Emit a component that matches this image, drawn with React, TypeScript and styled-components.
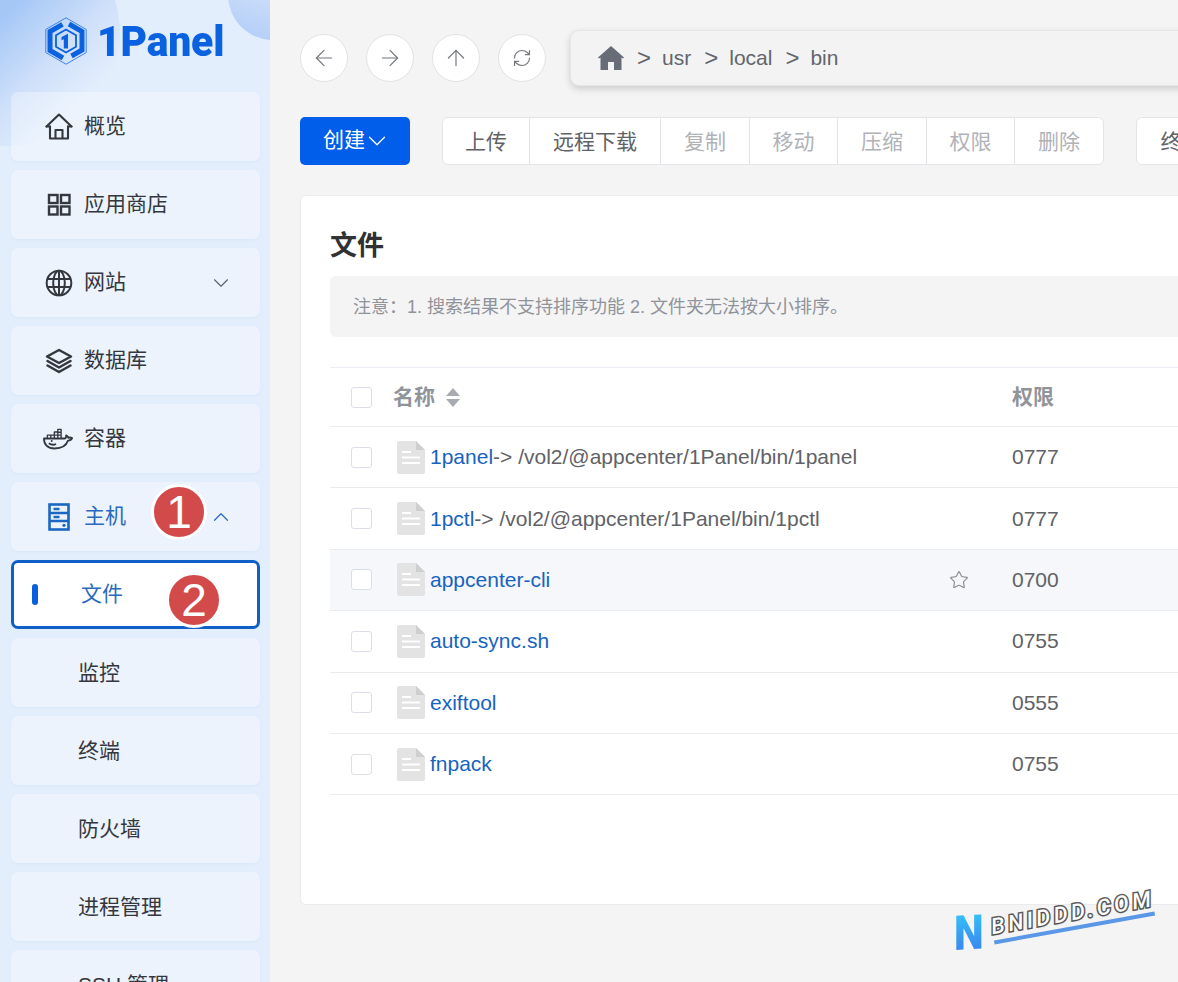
import React from "react";
import styled, { createGlobalStyle } from "styled-components";
import { ArrowLeft, ArrowRight, ArrowUp, RefreshCw, ChevronDown, ChevronUp, Star } from "lucide-react";

const CJK = `"Liberation Sans", "Noto Sans CJK SC", sans-serif`;

const Global = createGlobalStyle`
  html, body { margin: 0; padding: 0; height: 100%; overflow: hidden; background: #f4f4f5; }
  * { box-sizing: border-box; }
  body { font-family: ${CJK}; }
`;

const Page = styled.div`
  position: relative;
  display: flex;
  width: 1178px;
  height: 982px;
  overflow: hidden;
`;

const Sidebar = styled.aside`
  position: relative;
  flex: 0 0 270px;
  height: 982px;
  overflow: hidden;
  background: #e3eefc;
  padding: 0 10px 0 11px;
`;

const BlobLeft = styled.div`
  position: absolute;
  left: -105px;
  top: -79px;
  width: 225px;
  height: 225px;
  border-radius: 50%;
  background: linear-gradient(135deg, #a4c7f6 45%, #cfe0fa 66%, #e3eefc 82%);
`;

const BlobRight = styled.div`
  position: absolute;
  left: 228px;
  top: -50px;
  width: 90px;
  height: 90px;
  border-radius: 50%;
  background: linear-gradient(20deg, #b5cff8 10%, #dae7fb 75%);
`;

const LogoRow = styled.div`
  position: relative;
  display: flex;
  align-items: center;
  gap: 10px;
  height: 92px;
  padding: 0 0 10px 34px;
`;

const LogoText = styled.span`
  font-family: "Roboto", sans-serif;
  font-weight: 900;
  font-size: 43px;
  line-height: 48px;
  letter-spacing: -0.2px;
  color: #0a62e0;
  transform: scaleX(0.95);
  transform-origin: left center;
`;

const Menu = styled.nav`
  position: relative;
  display: flex;
  flex-direction: column;
  gap: 9px;
`;

const Item = styled.div<{ $open?: boolean }>`
  display: flex;
  align-items: center;
  flex: 0 0 69px;
  height: 69px;
  padding: 0 26px 0 34px;
  border-radius: 7px;
  background: rgba(255, 255, 255, 0.32);
  box-shadow: 0 1px 2px rgba(190, 210, 240, 0.25);
  color: ${(p) => (p.$open ? "#2a69bd" : "#34383e")};
  font-size: 21px;
  line-height: 28px;
`;

const ItemIcon = styled.span`
  display: flex;
  align-items: center;
  justify-content: center;
  width: 28px;
  height: 30px;
  margin-right: 11px;
`;

const ItemLabel = styled.span`
  flex: 1;
  padding-bottom: 2px;
`;

const SubItem = styled.div<{ $active?: boolean }>`
  position: relative;
  display: flex;
  align-items: center;
  flex: 0 0 69px;
  height: 69px;
  padding: 0 0 ${(p) => (p.$active ? "2px" : "0")} 67px;
  border-radius: 7px;
  font-size: 21px;
  line-height: 28px;
  background: ${(p) => (p.$active ? "#fff" : "rgba(255, 255, 255, 0.32)")};
  border: ${(p) => (p.$active ? "3px solid #105fc7" : "0")};
  color: ${(p) => (p.$active ? "#2a69bd" : "#34383e")};
  box-shadow: ${(p) => (p.$active ? "none" : "0 1px 2px rgba(190, 210, 240, 0.25)")};
`;

const ActiveBar = styled.span`
  position: absolute;
  left: 18px;
  top: 21px;
  width: 6px;
  height: 21px;
  border-radius: 3px;
  background: #0b5fdc;
`;

const Main = styled.main`
  flex: 0 0 1240px;
  padding: 30px 0 0 30px;
`;

const NavRow = styled.div`
  display: flex;
  align-items: center;
  height: 56px;
`;

const RoundBtn = styled.button`
  flex: 0 0 48px;
  width: 48px;
  height: 48px;
  margin-right: 18px;
  display: flex;
  align-items: center;
  justify-content: center;
  padding: 0;
  border-radius: 50%;
  border: 1.5px solid #e2e3e6;
  background: #fff;
  color: #74777c;
`;

const Crumbs = styled.div`
  flex: 1;
  display: flex;
  align-items: center;
  height: 56px;
  margin-left: 6px;
  padding-left: 27px;
  border: 1px solid #e6e6e8;
  border-radius: 9px;
  background: #f3f3f3;
  box-shadow: 0 3px 7px rgba(0, 0, 0, 0.16);
  color: #62666d;
  font-size: 21px;
`;

const CrumbSep = styled.span`
  margin: 0 11px 0 13px;
  font-size: 24px;
`;

const Toolbar = styled.div`
  display: flex;
  align-items: center;
  margin-top: 31px;
`;

const CreateBtn = styled.button`
  display: flex;
  align-items: center;
  width: 110px;
  height: 48px;
  padding: 0 0 2px 23px;
  border: 0;
  border-radius: 5px;
  background: #005eeb;
  color: #fff;
  font-family: ${CJK};
  font-size: 21px;
  line-height: 28px;
`;

const CreateChevron = styled(ChevronDown)`
  margin: 2px 0 0 -3px;
`;

const Group = styled.div`
  display: flex;
  margin-left: 32px;
`;

const GroupBtn = styled.button<{ $off?: boolean }>`
  height: 48px;
  padding: 0 ${(p) => (p.$off ? "23px" : "23.5px")} 2px;
  margin-left: -1.5px;
  border: 1.5px solid #e3e4e7;
  background: #fff;
  color: ${(p) => (p.$off ? "#b0b2b7" : "#606266")};
  font-family: ${CJK};
  font-size: 21px;
  &:first-child { margin-left: 0; padding: 0 22px 2px; border-radius: 6px 0 0 6px; }
  &:last-child { border-radius: 0 6px 6px 0; }
`;

const SoloBtn = styled(GroupBtn)`
  margin-left: 32px;
  border-radius: 6px !important;
`;

const Card = styled.section`
  margin-top: 30px;
  height: 710px;
  padding: 30px 29px;
  background: #fff;
  border: 1px solid #ebebed;
  border-radius: 6px;
`;

const Title = styled.h2`
  margin: 0;
  font-size: 27px;
  line-height: 40px;
  font-weight: 700;
  color: #303133;
`;

const Notice = styled.div`
  display: flex;
  align-items: center;
  height: 61px;
  margin-top: 10px;
  padding: 0 0 3px 23px;
  border-radius: 6px;
  background: #f4f4f5;
  color: #909399;
  font-size: 18px;
`;

const Table = styled.div`
  margin-top: 30px;
  border-top: 1.5px solid #ebeef5;
`;

const Row = styled.div<{ $head?: boolean; $hover?: boolean }>`
  display: grid;
  grid-template-columns: 63px 619px 1fr;
  align-items: center;
  height: ${(p) => (p.$head ? "59px" : "61.4px")};
  border-bottom: 1.5px solid #e9ebf0;
  background: ${(p) => (p.$hover ? "#f5f7fa" : "#fff")};
  color: #606266;
  font-size: 21px;
`;

const Check = styled.span`
  display: block;
  width: 21px;
  height: 21px;
  margin-left: 21px;
  border: 1.5px solid #dcdfe6;
  border-radius: 3px;
  background: #fff;
`;

const HeadCell = styled.div`
  display: flex;
  align-items: center;
  gap: 11px;
  padding-bottom: 4px;
  color: #909399;
  font-weight: 700;
`;

const NameCell = styled.div`
  position: relative;
  display: flex;
  align-items: center;
  padding-left: 4px;
`;

const FileLink = styled.span`
  margin-left: 5px;
  color: #1763bf;
`;

const StarMark = styled.span`
  position: absolute;
  left: 556px;
  top: 50%;
  margin-top: -10px;
  height: 22px;
  color: #8a8d92;
`;

const Badge = styled.div<{ $x: number; $y: number }>`
  position: absolute;
  left: ${(p) => p.$x}px;
  top: ${(p) => p.$y}px;
  width: 56px;
  height: 56px;
  display: flex;
  align-items: center;
  justify-content: center;
  border: 3px solid #fff;
  border-radius: 50%;
  background: #d24a4a;
  color: #fff;
  font-family: "Liberation Sans", sans-serif;
  font-size: 46px;
  line-height: 1;
`;

const Watermark = styled.div`
  position: absolute;
  left: 954px;
  top: 880px;
  width: 210px;
  height: 75px;
`;

const MarkN = styled.span`
  position: absolute;
  left: 0;
  top: 32px;
  font-family: "Roboto", sans-serif;
  font-weight: 900;
  font-size: 48px;
  line-height: 44px;
  transform: rotate(-3deg) skewX(-3deg) scaleX(0.88);
  transform-origin: left center;
  background: linear-gradient(180deg, #35c3fb, #3a7fec);
  -webkit-background-clip: text;
  background-clip: text;
  color: transparent;
`;

const MarkText = styled.span`
  position: absolute;
  left: 36px;
  top: 20px;
  font-family: "Roboto", sans-serif;
  font-style: italic;
  font-weight: 500;
  font-size: 22px;
  line-height: 26px;
  letter-spacing: 3.7px;
  white-space: nowrap;
  color: #fff;
  -webkit-text-stroke: 3px #5c5c5c;
  paint-order: stroke fill;
  text-shadow: 0 1px 2px rgba(0, 0, 0, 0.2);
  transform: rotate(-10deg);
`;

const MarkLine = styled.span`
  position: absolute;
  left: 39px;
  top: 46px;
  width: 163px;
  height: 4px;
  background: #5a97e6;
  transform: rotate(-10.2deg);
`;

const stroke = { fill: "none", stroke: "currentColor", strokeWidth: 2.1, strokeLinejoin: "round" as const, strokeLinecap: "round" as const };

const HomeIcon = () => (
  <svg width="28" height="27" viewBox="0 0 28 27" {...stroke}>
    <path d="M1.5 13.5 14 1.5l12.5 12M5 13.500V25.500h18V13.500M10.500 25.500v-8.500h7v8.500" />
    <path d="M1.500 13.500H5M23 13.500h3.500" />
  </svg>
);
const GridIcon = () => (
  <svg width="24" height="23" viewBox="0 0 24 23" fill="none" stroke="currentColor" strokeWidth="2.4">
    <rect x="2" y="2" width="8.500" height="8" />
    <rect x="14" y="2" width="8.500" height="8" />
    <rect x="2" y="13.500" width="8.500" height="8" />
    <rect x="14" y="13.500" width="8.500" height="8" />
  </svg>
);
const GlobeIcon = () => (
  <svg width="28" height="28" viewBox="0 0 28 28" fill="none" stroke="currentColor" strokeWidth="2">
    <circle cx="14" cy="14" r="12.300" />
    <ellipse cx="14" cy="14" rx="5.800" ry="12.300" />
    <path d="M14 1.700v24.600M2.200 10h23.600M2.200 18h23.600" />
  </svg>
);
const LayersIcon = () => (
  <svg width="28" height="26" viewBox="0 0 28 26" {...stroke} strokeWidth={2.5}>
    <path d="M14 2 26 8.500 14 15 2 8.500Z" />
    <path d="M2.500 13 14 19.500 25.500 13M2.500 17.500 14 24l11.500-6.500" />
  </svg>
);
const DockerIcon = () => (
  <svg width="31" height="22" viewBox="0 0 32 22" fill="none" stroke="currentColor" strokeWidth="1.900" strokeLinejoin="round" style={{ marginLeft: -1, flex: "none" }}>
    <path d="M1 10.500h21.500c1.200-.2 1.600-1 1.400-3.200 1.200.5 2 1.500 2.200 2.600 1.200-.6 2.600-.5 4 .1-1 2-2.700 2.700-4.300 2.600C24 18 19.500 20.800 12 20.800 5 20.800 1 17 1 10.500Z" />
    <path d="M4.500 10V7h3.600v3M8.100 7h3.600v3M11.700 10V3.800h3.600V10M15.300 10V1h3.400v9M11.700 7h7M15.300 4h3.400M8.100 10V7M18.700 10V7h-3.400" strokeWidth="1.400" />
    <path d="M6 15.500c2.500 1.700 5.500 1.700 7.500.6" />
    <circle cx="9" cy="13" r="1" fill="currentColor" stroke="none" />
  </svg>
);
const ServerIcon = () => (
  <svg width="22" height="28" viewBox="0 0 22 28" fill="none" stroke="#1c67c4" strokeWidth="2.600">
    <rect x="1.500" y="1.500" width="19" height="25" />
    <path d="M1.500 10h19M1.500 18h19M5.500 6h6M5.500 14h6" />
    <circle cx="16" cy="22.300" r="1.600" fill="#1c67c4" stroke="none" />
  </svg>
);
const LogoMark = () => (
  <svg width="42" height="48" viewBox="0 0 42 48">
    <path d="M21 .8 41.200 12.400v23.200L21 47.200.8 35.600V12.400Z" fill="none" stroke="#2f79e4" strokeWidth="0.900" />
    <g fill="none" stroke="#0a62e0" strokeWidth="5">
      <path d="M24 7 37 14.500V33l-10.500 6" />
      <path d="M18 41 5 33.500V14.500L17.500 7.300" />
    </g>
    <path d="M21 12.500 31 18.200V29.800L21 35.500 11 29.800V18.200Z" fill="none" stroke="#0a62e0" strokeWidth="1.800" />
    <path d="M16.500 20l6.500-3.200V31.500h-4.200V22.300l-2.300.9Z" fill="#0a62e0" />
  </svg>
);
const SolidHome = () => (
  <svg width="26" height="24" viewBox="0 0 26 24" fill="#676c76">
    <path d="M13 0 26 11.500l-1 1-1.500-1V24H16v-8h-6v8H2.500V11.500l-1.500 1-1-1Z" />
  </svg>
);
const FileIcon = () => (
  <svg width="28" height="33" viewBox="0 0 28 33">
    <path d="M2 0h17l9 9v22a2 2 0 0 1-2 2H2a2 2 0 0 1-2-2V2a2 2 0 0 1 2-2Z" fill="#e3e3e3" />
    <path d="M19 0l9 9h-9Z" fill="#cfcfcf" />
    <path d="M5 11h9M5 16.500h18M5 22h18" stroke="#fff" strokeWidth="2" />
  </svg>
);
const Caret = () => (
  <svg width="14" height="19" viewBox="0 0 14 19" fill="#a8abb2" style={{ marginTop: 4 }}>
    <path d="M7 0l7 8H0ZM7 19l-7-8h14Z" />
  </svg>
);

const menu = [
  { label: "概览", icon: <HomeIcon /> },
  { label: "应用商店", icon: <GridIcon /> },
  { label: "网站", icon: <GlobeIcon />, chev: "down" },
  { label: "数据库", icon: <LayersIcon /> },
  { label: "容器", icon: <DockerIcon /> },
  { label: "主机", icon: <ServerIcon />, chev: "up", open: true },
];
const subs = ["文件", "监控", "终端", "防火墙", "进程管理", "SSH 管理"];
const tools = ["上传", "远程下载", "复制", "移动", "压缩", "权限", "删除"];
const files = [
  { name: "1panel", link: "-> /vol2/@appcenter/1Panel/bin/1panel", perm: "0777" },
  { name: "1pctl", link: "-> /vol2/@appcenter/1Panel/bin/1pctl", perm: "0777" },
  { name: "appcenter-cli", perm: "0700", hover: true },
  { name: "auto-sync.sh", perm: "0755" },
  { name: "exiftool", perm: "0555" },
  { name: "fnpack", perm: "0755" },
];

export default function App() {
  return (
    <Page>
      <Global />
      <Sidebar>
        <BlobLeft />
        <BlobRight />
        <LogoRow>
          <LogoMark />
          <LogoText>1Panel</LogoText>
        </LogoRow>
        <Menu>
          {menu.map((m) => (
            <Item key={m.label} $open={m.open}>
              <ItemIcon>{m.icon}</ItemIcon>
              <ItemLabel>{m.label}</ItemLabel>
              {m.chev === "down" && <ChevronDown size={26} strokeWidth={1} color="#5d6168" />}
              {m.chev === "up" && <ChevronUp size={26} strokeWidth={1.1} color="#2a69bd" />}
            </Item>
          ))}
          {subs.map((s, i) => (
            <SubItem key={s} $active={i === 0}>
              {i === 0 && <ActiveBar />}
              {s}
            </SubItem>
          ))}
        </Menu>
      </Sidebar>
      <Main>
        <NavRow>
          <RoundBtn><ArrowLeft size={26} strokeWidth={1.1} /></RoundBtn>
          <RoundBtn><ArrowRight size={26} strokeWidth={1.1} /></RoundBtn>
          <RoundBtn><ArrowUp size={26} strokeWidth={1.1} /></RoundBtn>
          <RoundBtn><RefreshCw size={20} strokeWidth={1.4} /></RoundBtn>
          <Crumbs>
            <SolidHome />
            <CrumbSep>&gt;</CrumbSep>usr
            <CrumbSep>&gt;</CrumbSep>local
            <CrumbSep>&gt;</CrumbSep>bin
          </Crumbs>
        </NavRow>
        <Toolbar>
          <CreateBtn>创建<CreateChevron size={30} strokeWidth={1} /></CreateBtn>
          <Group>
            {tools.map((t, i) => (
              <GroupBtn key={t} $off={i > 1}>{t}</GroupBtn>
            ))}
          </Group>
          <SoloBtn>终端</SoloBtn>
        </Toolbar>
        <Card>
          <Title>文件</Title>
          <Notice>注意：1. 搜索结果不支持排序功能 2. 文件夹无法按大小排序。</Notice>
          <Table>
            <Row $head>
              <Check />
              <HeadCell>名称 <Caret /></HeadCell>
              <HeadCell>权限</HeadCell>
            </Row>
            {files.map((f) => (
              <Row key={f.name} $hover={f.hover}>
                <Check />
                <NameCell>
                  <FileIcon />
                  <FileLink>{f.name}</FileLink>
                  {f.link}
                  {f.hover && <StarMark><Star size={20} strokeWidth={1.4} /></StarMark>}
                </NameCell>
                <div>{f.perm}</div>
              </Row>
            ))}
          </Table>
        </Card>
      </Main>
      <Badge $x={151} $y={484}>1</Badge>
      <Badge $x={166} $y={572}>2</Badge>
      <Watermark>
        <MarkN>N</MarkN>
        <MarkText>BNIDDD.COM</MarkText>
        <MarkLine />
      </Watermark>
    </Page>
  );
}
